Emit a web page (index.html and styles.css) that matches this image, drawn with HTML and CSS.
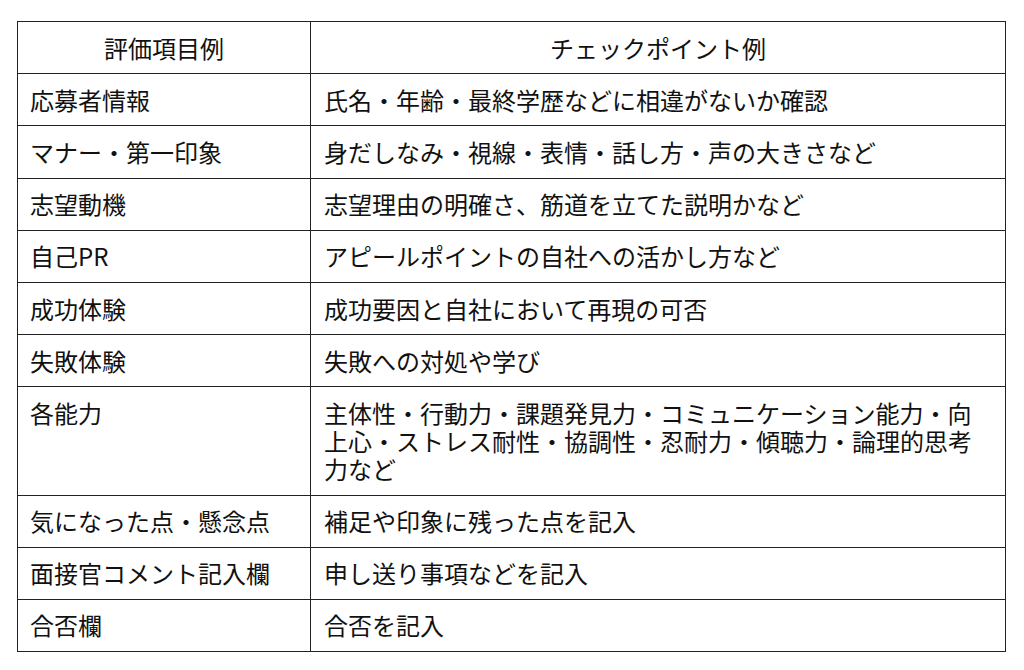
FILE: index.html
```html
<!DOCTYPE html>
<html lang="ja">
<head>
<meta charset="utf-8">
<link rel="stylesheet" href="styles.css">
</head>
<body>
<table class="eval">
  <thead>
    <tr><th class="c1">評価項目例</th><th class="c2">チェックポイント例</th></tr>
  </thead>
  <tbody>
    <tr><td>応募者情報</td><td>氏名・年齢・最終学歴などに相違がないか確認</td></tr>
    <tr><td>マナー・第一印象</td><td>身だしなみ・視線・表情・話し方・声の大きさなど</td></tr>
    <tr><td>志望動機</td><td>志望理由の明確さ、筋道を立てた説明かなど</td></tr>
    <tr><td>自己PR</td><td>アピールポイントの自社への活かし方など</td></tr>
    <tr><td>成功体験</td><td>成功要因と自社において再現の可否</td></tr>
    <tr><td>失敗体験</td><td>失敗への対処や学び</td></tr>
    <tr><td>各能力</td><td>主体性・行動力・課題発見力・コミュニケーション能力・向上心・ストレス耐性・協調性・忍耐力・傾聴力・論理的思考力など</td></tr>
    <tr><td>気になった点・懸念点</td><td>補足や印象に残った点を記入</td></tr>
    <tr><td>面接官コメント記入欄</td><td>申し送り事項などを記入</td></tr>
    <tr><td>合否欄</td><td>合否を記入</td></tr>
  </tbody>
</table>
</body>
</html>
```
FILE: styles.css
```css
html, body {
  margin: 0;
  padding: 0;
  background: #ffffff;
}
body {
  padding: 21px 0 0 17px;
  font-family: "Noto Sans CJK JP", "Noto Sans", sans-serif;
  color: #111;
}
.eval {
  border-collapse: collapse;
  width: 989px;
  table-layout: fixed;
  font-size: 24px;
  line-height: 28px;
}
.eval th, .eval td {
  border: 1.5px solid #222;
  padding: 11.6px 12px;
  text-align: left;
  vertical-align: top;
  font-weight: 400;
}
.eval th {
  text-align: center;
}
.eval .c1 {
  width: 293px;
  box-sizing: border-box;
}
.eval td:last-child {
  padding-left: 13px;
}
```
